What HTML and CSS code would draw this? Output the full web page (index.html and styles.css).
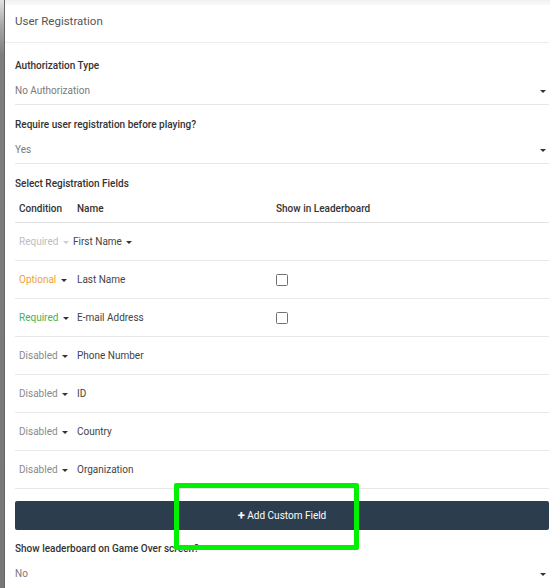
FILE: index.html
```html
<!DOCTYPE html>
<html lang="en">
<head>
<meta charset="utf-8">
<title>User Registration</title>
<link rel="stylesheet" href="styles.css">
</head>
<body>
<div class="frame">
  <div class="edge"></div>
  <main class="panel">
    <header class="panel-head">User Registration</header>
    <div class="panel-body">
      <div class="field">
        <div class="label">Authorization Type</div>
        <div class="select"><span class="value">No Authorization</span><span class="caret"></span></div>
      </div>
      <div class="field">
        <div class="label">Require user registration before playing?</div>
        <div class="select"><span class="value">Yes</span><span class="caret"></span></div>
      </div>
      <div class="fields">
        <div class="label">Select Registration Fields</div>
        <div class="table">
          <div class="row head">
            <span class="cond">Condition</span><span class="name">Name</span><span class="show">Show in Leaderboard</span>
          </div>
          <div class="row">
            <span class="cond locked">Required <span class="caret light"></span></span><span class="name first">First Name <span class="caret"></span></span><span class="show"></span>
          </div>
          <div class="row">
            <span class="cond optional">Optional <span class="caret"></span></span><span class="name">Last Name</span><span class="show"><span class="check"></span></span>
          </div>
          <div class="row">
            <span class="cond required">Required <span class="caret"></span></span><span class="name">E-mail Address</span><span class="show"><span class="check"></span></span>
          </div>
          <div class="row">
            <span class="cond">Disabled <span class="caret"></span></span><span class="name">Phone Number</span><span class="show"></span>
          </div>
          <div class="row">
            <span class="cond">Disabled <span class="caret"></span></span><span class="name">ID</span><span class="show"></span>
          </div>
          <div class="row">
            <span class="cond">Disabled <span class="caret"></span></span><span class="name">Country</span><span class="show"></span>
          </div>
          <div class="row">
            <span class="cond">Disabled <span class="caret"></span></span><span class="name">Organization</span><span class="show"></span>
          </div>
        </div>
        <button class="add-btn" type="button"><span class="plus">+</span> Add Custom Field</button>
      </div>
      <div class="field last">
        <div class="label">Show leaderboard on Game Over screen?</div>
        <div class="select"><span class="value">No</span><span class="caret"></span></div>
      </div>
    </div>
    <div class="highlight"></div>
  </main>
</div>
</body>
</html>
```

FILE: styles.css
```css
html, body {
  margin: 0;
  padding: 0;
  background: #fff;
}

body {
  font-family: Roboto, "Liberation Sans", Arial, sans-serif;
  color: #444;
  font-size: 10px;
  overflow: hidden;
}

.frame {
  display: flex;
  height: 588px;
  background: linear-gradient(#f0f0f0, #fafafa 5px, #fff 6px);
}

/* dark window edge on the left */
.edge {
  width: 5px;
  flex: none;
  background: linear-gradient(#e2e2e2 0, #a8a8a8 25px, #7e7e7e 55px, #777 100%);
  box-shadow: inset -1px 0 0 #666;
}

.panel {
  position: relative;
  flex: 1;
  margin-top: 5px;
  background: #fff;
  padding-right: 1px;
}

.panel-head {
  height: 37px;
  line-height: 32px;
  padding-left: 10px;
  font-size: 11.5px;
  color: #555;
  border-bottom: 1px solid #ececec;
}

.panel-body {
  padding: 3px 0 0 10px;
}

.label {
  font-size: 10px;
  font-weight: 500;
  color: #333;
  line-height: 14px;
}

.field {
  padding: 13px 0 6px;
  border-bottom: 1px solid #e6e6e6;
}

.select {
  display: flex;
  align-items: center;
  justify-content: space-between;
  margin-top: 11px;
  line-height: 14px;
  padding-right: 3px;
}

.value {
  color: #7a7a7a;
}

.caret {
  display: inline-block;
  width: 0;
  height: 0;
  border-left: 3px solid transparent;
  border-right: 3px solid transparent;
  border-top: 3.5px solid #333;
  vertical-align: 1px;
  margin-left: 2px;
}

.caret.light {
  border-top-color: #ccc;
}

.fields {
  padding-top: 13px;
}

.table {
  margin-top: 3px;
}

.row {
  display: grid;
  grid-template-columns: 58px 199px 1fr;
  align-items: center;
  height: 37px;
  padding-left: 4px;
  border-bottom: 1px solid #e8e8e8;
}

.row.head {
  height: 28px;
  font-weight: 500;
  color: #333;
  font-size: 10px;
  border-bottom-color: #e2e2e2;
}

.cond {
  color: #8a8a8a;
}

.cond.locked {
  color: #bdbdbd;
}

.cond.optional {
  color: #f0a232;
}

.cond.required {
  color: #4caf50;
}

.name {
  color: #444;
}

.row.head .name,
.row.head .cond {
  color: #333;
}

.name.first {
  margin-left: -4px;
}

.check {
  display: block;
  width: 10px;
  height: 10px;
  border: 1.5px solid #707070;
  border-radius: 1.5px;
}

.add-btn {
  display: block;
  width: 100%;
  height: 29px;
  margin-top: 12px;
  border: 0;
  border-radius: 2px;
  background: #2c3d4d;
  color: #fff;
  font-family: inherit;
  font-size: 10px;
  cursor: pointer;
}

.plus {
  font-weight: 700;
  font-size: 13px;
  vertical-align: -1px;
}

.field.last {
  margin-top: 12px;
  padding-top: 0;
  border-bottom: 0;
}

.field.last .select {
  margin-top: 11px;
}

/* callout frame drawn over the button */
.highlight {
  position: absolute;
  left: 169px;
  top: 478px;
  width: 175px;
  height: 57px;
  border: 5px solid #00f200;
  border-radius: 2px;
}
```
